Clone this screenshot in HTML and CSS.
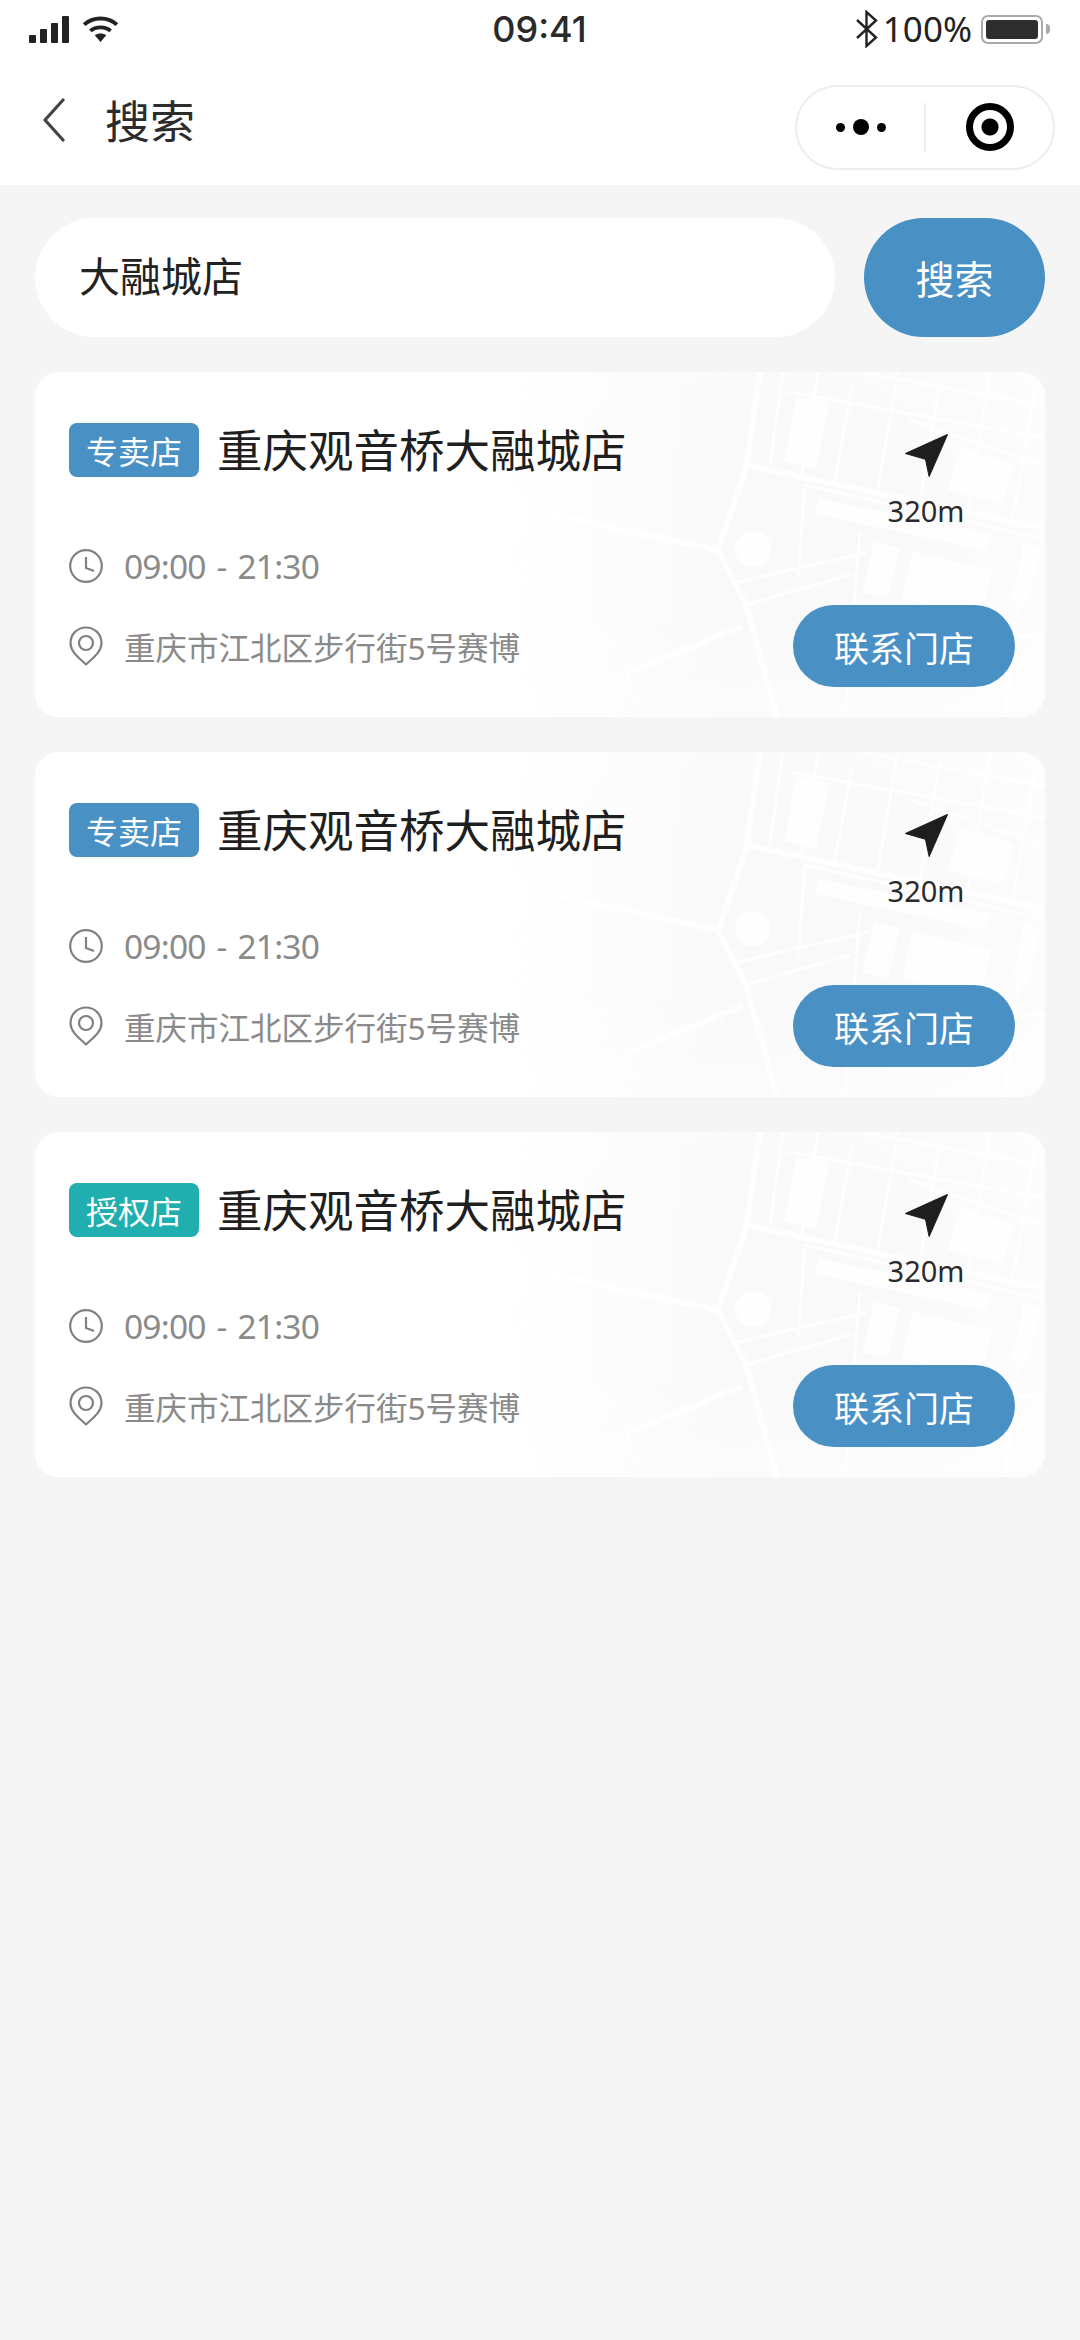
FILE: index.html
```html
<!DOCTYPE html>
<html>
    <head>
        <meta charset="utf-8">
        <meta name="viewport" content="width=device-width, initial-scale=1.0">
        <title>搜索</title>
        <link rel="stylesheet" href="styles.css">
    </head>
    <body>
        <svg class="defs" width="0" height="0">
            <defs>
                <linearGradient id="mapFade" x1="0" y1="0" x2="1" y2="0">
                    <stop offset="0" stop-color="#000"></stop>
                    <stop offset="0.42" stop-color="#fff"></stop>
                    <stop offset="1" stop-color="#fff"></stop>
                </linearGradient>
                <radialGradient id="mapGlow" cx="0.38" cy="0.42" r="0.8">
                    <stop offset="0" stop-color="#fff"></stop>
                    <stop offset="0.4" stop-color="#fff"></stop>
                    <stop offset="1" stop-color="#444"></stop>
                </radialGradient>
                <mask id="mapMaskA">
                    <rect width="545" height="345" fill="url(#mapFade)"></rect>
                </mask>
                <mask id="mapMaskB">
                    <rect width="545" height="345" fill="url(#mapGlow)"></rect>
                </mask>
                <symbol id="map" viewBox="0 0 545 345">
                    <g mask="url(#mapMaskA)">
                        <g mask="url(#mapMaskB)">
                            <rect width="545" height="345" fill="#f9f9f9"></rect>
                            <g fill="none" stroke="#fff" stroke-linecap="round" opacity="0.85">
                                <g stroke-width="6">
                                    <path d="M53 143 L218 178"></path>
                                    <path d="M218 178 L246 233 L277 345"></path>
                                    <path d="M218 178 L246 97 L260 0"></path>
                                    <path d="M246 93 L545 157"></path>
                                    <path d="M240 255 L130 300 L110 345"></path>
                                </g>
                                <g stroke-width="3">
                                    <path d="M305 113 L545 167"></path>
                                    <path d="M305 113 L298 205"></path>
                                    <path d="M238 210 L368 180"></path>
                                    <path d="M245 233 L350 203"></path>
                                    <path d="M283 0 L270 92"></path>
                                    <path d="M318 0 L302 100"></path>
                                    <path d="M352 15 L335 108"></path>
                                    <path d="M398 0 L378 116"></path>
                                    <path d="M440 10 L420 128"></path>
                                    <path d="M490 0 L468 138"></path>
                                    <path d="M535 20 L512 150"></path>
                                    <path d="M290 20 L545 66"></path>
                                    <path d="M360 0 L545 34"></path>
                                    <path d="M410 48 L540 92"></path>
                                    <path d="M360 160 L345 345"></path>
                                    <path d="M525 172 L505 345"></path>
                                    <path d="M300 285 L545 262"></path>
                                </g>
                            </g>
                            <g fill="#fff" opacity="0.85">
                                <circle cx="253" cy="177" r="18"></circle>
                                <path d="M319 127 L491 162 L485 178 L315 142 Z"></path>
                                <path d="M374 170 L400 176 L388 226 L362 220 Z"></path>
                                <path d="M412 180 L492 198 L480 246 L402 226 Z"></path>
                                <path d="M524 172 L540 176 L528 232 L512 228 Z"></path>
                                <path d="M296 25 L330 30 L316 96 L284 90 Z"></path>
                                <path d="M460 76 L515 92 L502 132 L448 118 Z"></path>
                            </g>
                            <path d="M116 27 L178 18 L186 64 L160 102 L122 86 Z" fill="#fff" opacity="0.25"></path>
                        </g>
                    </g>
                </symbol>
                <symbol id="iconNav" viewBox="0 0 41 41">
                    <path d="M40.500 0.500 L0.500 18.500 L19.500 24 L23 40.500 Z" fill="#1e1e1e" stroke="#1e1e1e" stroke-width="1" stroke-linejoin="round"></path>
                </symbol>
                <symbol id="iconClock" viewBox="0 0 34 34">
                    <circle cx="17" cy="17" r="15.800" fill="none" stroke="#808080" stroke-width="2.200"></circle>
                    <path d="M17 8 V19 L25 22" fill="none" stroke="#808080" stroke-width="2.200" stroke-linejoin="round"></path>
                </symbol>
                <symbol id="iconPin" viewBox="0 0 34 40">
                    <path d="M17 38.500 C11 32.500 1.500 26.500 1.500 17 C1.500 8 8.500 1.500 17 1.500 C25.500 1.500 32.500 8 32.500 17 C32.500 26.500 23 32.500 17 38.500 Z" fill="none" stroke="#808080" stroke-width="2.200" stroke-linejoin="round"></path>
                    <circle cx="17" cy="17" r="7" fill="none" stroke="#808080" stroke-width="2.200"></circle>
                </symbol>
            </defs>
        </svg>

        <div class="header">
            <div class="statusBar">
                <div class="statusLeft">
                    <div class="signal">
                        <span class="bar1"></span>
                        <span class="bar2"></span>
                        <span class="bar3"></span>
                        <span class="bar4"></span>
                    </div>
                    <svg class="wifi" width="37" height="26" viewBox="0 0 38 27">
                        <path d="M2 9 C11 0.500 27 0.500 36 9" fill="none" stroke="#222" stroke-width="4"></path>
                        <path d="M8.500 15.500 C14 10.500 24 10.500 29.500 15.500" fill="none" stroke="#222" stroke-width="4"></path>
                        <path d="M13 20 C16.500 17.500 21.500 17.500 25 20 L19 27 Z" fill="#222"></path>
                    </svg>
                </div>
                <div class="statusTime">09:41</div>
                <div class="statusRight">
                    <svg class="bluetooth" width="24" height="38" viewBox="0 0 24 38">
                        <path d="M2 10 L21 27.500 L11.500 36 V2 L21 10.500 L2 28" fill="none" stroke="#222" stroke-width="2.400"></path>
                    </svg>
                    <span class="batteryText">100%</span>
                    <div class="battery"><span class="batteryFill"></span></div>
                    <span class="batteryNub"></span>
                </div>
            </div>
            <div class="navBar">
                <svg class="backIcon" width="24" height="44" viewBox="0 0 24 44">
                    <path d="M21 2 L3 22 L21 42" fill="none" stroke="#444" stroke-width="3.200" stroke-linecap="round" stroke-linejoin="round"></path>
                </svg>
                <div class="navTitle">搜索</div>
                <div class="capsule">
                    <div class="capsuleMore">
                        <span class="dotSmall"></span>
                        <span class="dotBig"></span>
                        <span class="dotSmall"></span>
                    </div>
                    <div class="capsuleLine"></div>
                    <div class="capsuleClose"><span class="closeDot"></span></div>
                </div>
            </div>
        </div>

        <div class="searchRow">
            <div class="searchInput">大融城店</div>
            <div class="searchBtn">搜索</div>
        </div>

        <div class="storeList">
            <div class="storeCard">
                <svg class="cardMap"><use href="#map"></use></svg>
                <div class="cardHead">
                    <span class="storeTag">专卖店</span>
                    <span class="storeName">重庆观音桥大融城店</span>
                    <div class="distance">
                        <svg class="navIcon"><use href="#iconNav"></use></svg>
                        <span class="distanceText">320m</span>
                    </div>
                </div>
                <div class="timeRow">
                    <svg class="clockIcon"><use href="#iconClock"></use></svg>
                    <span class="timeText">09:00 - 21:30</span>
                </div>
                <div class="addressRow">
                    <svg class="pinIcon"><use href="#iconPin"></use></svg>
                    <span class="addressText">重庆市江北区步行街5号赛博</span>
                    <div class="contactBtn">联系门店</div>
                </div>
            </div>

            <div class="storeCard">
                <svg class="cardMap"><use href="#map"></use></svg>
                <div class="cardHead">
                    <span class="storeTag">专卖店</span>
                    <span class="storeName">重庆观音桥大融城店</span>
                    <div class="distance">
                        <svg class="navIcon"><use href="#iconNav"></use></svg>
                        <span class="distanceText">320m</span>
                    </div>
                </div>
                <div class="timeRow">
                    <svg class="clockIcon"><use href="#iconClock"></use></svg>
                    <span class="timeText">09:00 - 21:30</span>
                </div>
                <div class="addressRow">
                    <svg class="pinIcon"><use href="#iconPin"></use></svg>
                    <span class="addressText">重庆市江北区步行街5号赛博</span>
                    <div class="contactBtn">联系门店</div>
                </div>
            </div>

            <div class="storeCard">
                <svg class="cardMap"><use href="#map"></use></svg>
                <div class="cardHead">
                    <span class="storeTag tagTeal">授权店</span>
                    <span class="storeName">重庆观音桥大融城店</span>
                    <div class="distance">
                        <svg class="navIcon"><use href="#iconNav"></use></svg>
                        <span class="distanceText">320m</span>
                    </div>
                </div>
                <div class="timeRow">
                    <svg class="clockIcon"><use href="#iconClock"></use></svg>
                    <span class="timeText">09:00 - 21:30</span>
                </div>
                <div class="addressRow">
                    <svg class="pinIcon"><use href="#iconPin"></use></svg>
                    <span class="addressText">重庆市江北区步行街5号赛博</span>
                    <div class="contactBtn">联系门店</div>
                </div>
            </div>
        </div>
    </body>
</html>
```

FILE: styles.css
```css
* {
    box-sizing: border-box;
}
html, body {
    margin: 0;
    padding: 0;
}
body {
    width: 1080px;
    height: 2340px;
    background: #f5f5f5;
    color: #222;
    font-family: "Noto Sans", "Noto Sans CJK SC", sans-serif;
    overflow: hidden;
}
.defs {
    display: block;
    height: 0;
}

/* header */
.header {
    background: #fff;
    height: 185px;
}
.statusBar {
    display: grid;
    grid-template-columns: 1fr auto 1fr;
    align-items: center;
    height: 58px;
    padding: 0 30px 0 29px;
}
.statusLeft {
    display: flex;
    align-items: center;
    gap: 13px;
}
.signal {
    display: flex;
    align-items: flex-end;
    gap: 4px;
    height: 27px;
}
.signal span {
    width: 7px;
    background: #222;
    border-radius: 1px;
}
.bar1 { height: 8px; }
.bar2 { height: 14px; }
.bar3 { height: 20px; }
.bar4 { height: 27px; }
.statusTime {
    font-family: "Inter", sans-serif;
    font-size: 36px;
    font-weight: 500;
    color: #2a2a2a;
}
.statusRight {
    display: flex;
    align-items: center;
    justify-content: flex-end;
}
.batteryText {
    font-size: 35px;
    margin: 0 9px 0 4px;
    line-height: 40px;
}
.battery {
    width: 62px;
    height: 29px;
    padding: 3px;
    border: 2.500px solid #aaa;
    border-radius: 7px;
}
.batteryFill {
    display: block;
    height: 100%;
    background: #2e2e2e;
    border-radius: 3px;
}
.batteryNub {
    width: 4px;
    height: 10px;
    margin-left: 3px;
    background: #aaa;
    border-radius: 0 4px 4px 0;
}
.navBar {
    display: flex;
    align-items: center;
    height: 127px;
    padding: 0 25px 4px 42px;
}
.backIcon {
    flex-shrink: 0;
}
.navTitle {
    font-size: 45px;
    margin-left: 39px;
    color: #2c2c2c;
}
.capsule {
    display: flex;
    align-items: center;
    width: 260px;
    height: 85px;
    margin: 15px 0 0 auto;
    border: 2px solid #ededed;
    border-radius: 43px;
}
.capsuleMore {
    display: flex;
    align-items: center;
    justify-content: center;
    gap: 8px;
    flex: 1;
}
.dotSmall {
    width: 9px;
    height: 9px;
    border-radius: 50%;
    background: #000;
}
.dotBig {
    width: 16px;
    height: 16px;
    border-radius: 50%;
    background: #000;
}
.capsuleLine {
    width: 2px;
    height: 49px;
    background: #eee;
}
.capsuleClose {
    display: flex;
    align-items: center;
    justify-content: center;
    flex: 1;
}
.closeDot {
    width: 48px;
    height: 48px;
    border: 7px solid #000;
    border-radius: 50%;
    background: radial-gradient(circle, #000 0, #000 8px, #fff 9px);
}

/* search */
.searchRow {
    display: flex;
    gap: 29px;
    margin-top: 33px;
    padding: 0 35px;
}
.searchInput {
    display: flex;
    align-items: center;
    width: 800px;
    height: 119px;
    padding: 0 0 8px 44px;
    background: #fff;
    border-radius: 60px;
    font-size: 41px;
    color: #222;
}
.searchBtn {
    display: flex;
    align-items: center;
    justify-content: center;
    width: 181px;
    height: 119px;
    padding-bottom: 2px;
    background: #4991c5;
    border-radius: 60px;
    font-size: 39px;
    color: #fff;
}

/* store card */
.storeList {
    display: flex;
    flex-direction: column;
    gap: 35px;
    margin-top: 35px;
    padding: 0 35px;
}
.storeCard {
    position: relative;
    height: 345px;
    padding: 51px 30px 30px 34px;
    background: #fff;
    border-radius: 24px;
    overflow: hidden;
}
.cardMap {
    position: absolute;
    top: 0;
    right: 0;
    width: 545px;
    height: 345px;
}
.cardHead, .timeRow, .addressRow {
    position: relative;
    display: flex;
}
.cardHead {
    height: 102px;
}
.storeTag {
    display: flex;
    align-items: center;
    justify-content: center;
    width: 130px;
    height: 54px;
    background: #4991c5;
    border-radius: 8px;
    font-size: 32px;
    color: #fff;
}
.tagTeal {
    background: #20aeae;
}
.storeName {
    margin-left: 18px;
    font-size: 45.500px;
    line-height: 54px;
    color: #1f1f1f;
}
.distance {
    display: flex;
    flex-direction: column;
    align-items: center;
    width: 120px;
    margin: 11px 29px 0 auto;
}
.navIcon {
    flex-shrink: 0;
    width: 43px;
    height: 43px;
}
.distanceText {
    flex-shrink: 0;
    margin-top: 17px;
    font-size: 29px;
    line-height: 34px;
    color: #2a2a2a;
}
.timeRow {
    align-items: center;
    margin-top: 24px;
}
.clockIcon {
    width: 34px;
    height: 34px;
}
.timeText {
    margin-left: 21px;
    font-size: 33.500px;
    line-height: 34px;
    letter-spacing: -0.8px;
    word-spacing: 3px;
    color: #8a8a8a;
}
.addressRow {
    align-items: center;
    height: 82px;
    margin-top: 22px;
}
.pinIcon {
    width: 34px;
    height: 40px;
}
.addressText {
    margin-left: 21px;
    font-size: 31.500px;
    color: #8a8a8a;
}
.contactBtn {
    display: flex;
    align-items: center;
    justify-content: center;
    width: 222px;
    height: 82px;
    margin-left: auto;
    background: #4991c5;
    border-radius: 41px;
    font-size: 35px;
    color: #fff;
}
```
